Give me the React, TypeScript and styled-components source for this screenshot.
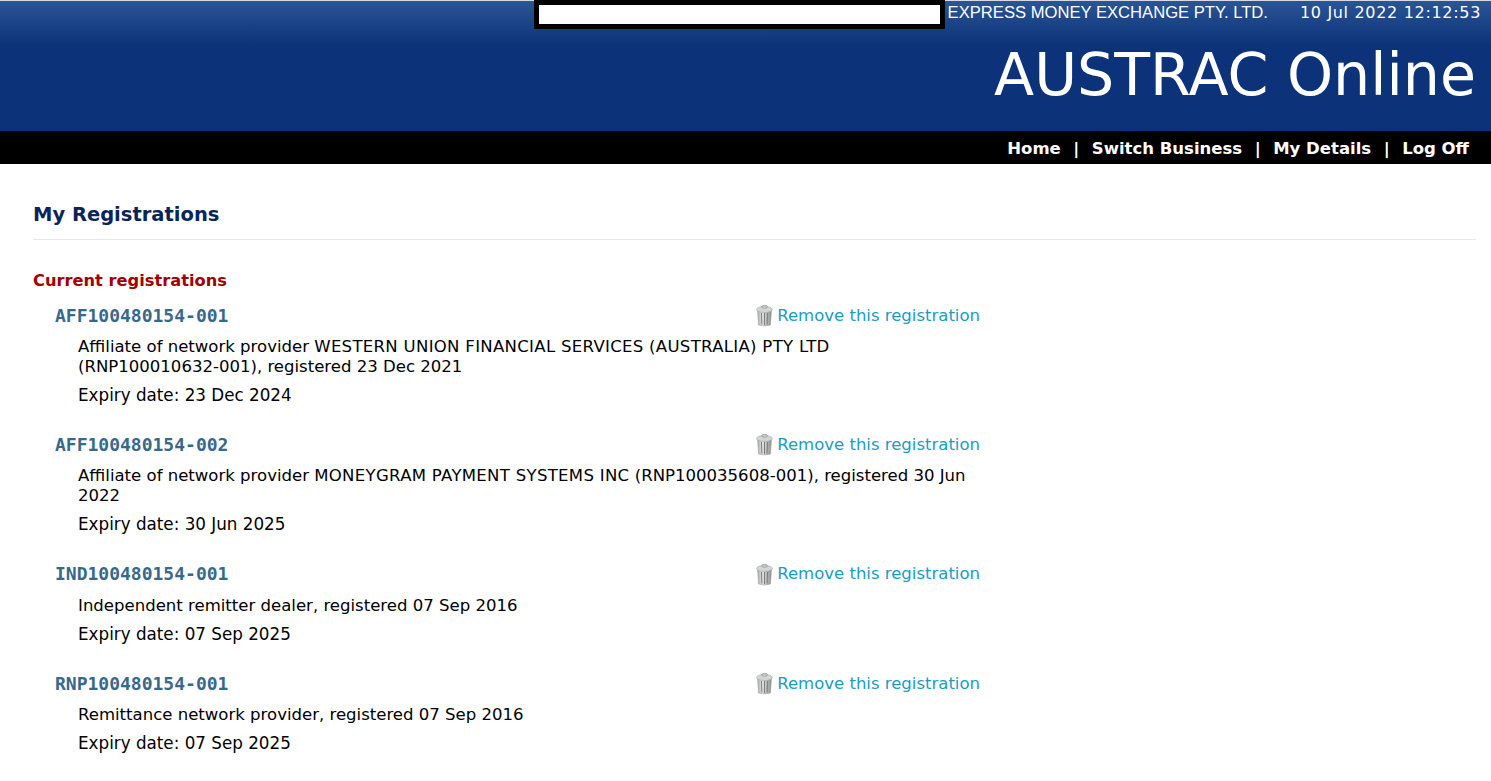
import { createGlobalStyle, styled } from "styled-components";

const GlobalStyle = createGlobalStyle`
  html, body { margin: 0; padding: 0; background: #fff; }
  body { font-family: "DejaVu Sans", Verdana, sans-serif; color: #000; overflow: hidden; }
`;

const Header = styled.header`
  height: 131px;
  border-top: 1px solid #d4dbe6;
  box-sizing: border-box;
  background: linear-gradient(#2a5596 0, #0c3379 44px, #0c3379 100%);
  color: #fff;
  display: flex;
  flex-direction: column;
`;

const TopRow = styled.div`
  display: flex;
  justify-content: flex-end;
  align-items: flex-start;
  height: 29px;
  margin-top: -1px;
  padding-right: 10px;
`;

const Redacted = styled.div`
  width: 401px;
  height: 19px;
  border: 5px solid #000;
  background: #fff;
  margin-right: 3px;
`;

const Company = styled.span`
  font-family: "Liberation Sans", Arial, sans-serif;
  font-size: 16.62px;
  line-height: 25px;
  margin-right: 32px;
`;

const Stamp = styled.span`
  font-size: 16px;
  letter-spacing: 0.68px;
  line-height: 25px;
`;

const Title = styled.h1`
  margin: 11px 15px 0 0;
  font-size: 58.6px;
  line-height: 70px;
  font-weight: 400;
  text-align: right;
`;

const NavBar = styled.nav`
  height: 33px;
  background: #000;
  color: #fff;
  display: flex;
  justify-content: flex-end;
  align-items: center;
  padding: 1px 22px 0 0;
  box-sizing: border-box;
  font-size: 16.5px;
  font-weight: 700;
`;

const NavSep = styled.span`
  margin: 0 12.5px;
`;

const Main = styled.main`
  padding: 37px 15px 0 33px;
`;

const PageTitle = styled.h2`
  margin: 0;
  padding-bottom: 11px;
  border-bottom: 1px solid #e8e8e8;
  color: #0a2459;
  font-size: 19.5px;
  line-height: 27px;
  font-weight: 700;
`;

const SectionTitle = styled.h3`
  margin: 31px 0 0;
  color: #a00000;
  font-size: 16.25px;
  line-height: 20px;
  font-weight: 700;
`;

const List = styled.div`
  width: 947px;
  margin-top: 12px;
`;

const Item = styled.section`
  padding-left: 22px;
  margin-bottom: 27.4px;
`;

const ItemHead = styled.div`
  display: flex;
  justify-content: space-between;
  align-items: center;
  height: 24px;
`;

const Code = styled.span`
  font-family: "DejaVu Sans Mono", monospace;
  font-weight: 700;
  font-size: 18px;
  color: #38688a;
`;

const RemoveLink = styled.a`
  display: flex;
  align-items: center;
  gap: 3px;
  color: #1a9cc4;
  font-size: 16.5px;
  text-decoration: none;
  cursor: pointer;
`;

const Desc = styled.p`
  margin: 10px 0 0 23px;
  font-size: 16.55px;
  line-height: 20px;
`;

const ProviderName = styled.span`
  letter-spacing: 0.3px;
`;

const RegNumber = styled.span`
  white-space: nowrap;
`;

const Expiry = styled.p`
  margin: 8px 0 0 23px;
  font-size: 16.75px;
  line-height: 20px;
`;

function TrashIcon() {
  return (
    <svg width="19" height="24" viewBox="0 0 19 24">
      <defs>
        <linearGradient id="can" x1="0" x2="1" y1="0" y2="0">
          <stop offset="0" stopColor="#a4a8a6" />
          <stop offset="0.35" stopColor="#e8eae8" />
          <stop offset="1" stopColor="#8a8e8c" />
        </linearGradient>
      </defs>
      <path d="M2.5 7 L16.5 7 L15.5 22 Q9.5 24 3.5 22 Z" fill="url(#can)" stroke="#9a9d9b" strokeWidth="0.5" />
      <path d="M6.5 10 L6.9 21.5 M9.5 10 L9.5 22 M12.5 10 L12.1 21.5" stroke="#7c807e" strokeWidth="1.1" />
      <ellipse cx="9.5" cy="6.5" rx="8" ry="3" fill="#d3d6d4" stroke="#a0a3a1" strokeWidth="0.6" />
      <ellipse cx="9.5" cy="3.8" rx="3" ry="1.4" fill="none" stroke="#a0a3a1" strokeWidth="1" />
    </svg>
  );
}

export default function App() {
  return (
    <>
      <GlobalStyle />
      <Header>
        <TopRow>
          <Redacted />
          <Company>EXPRESS MONEY EXCHANGE PTY. LTD.</Company>
          <Stamp>10 Jul 2022 12:12:53</Stamp>
        </TopRow>
        <Title>AUSTRAC Online</Title>
      </Header>
      <NavBar>
        <span>Home</span>
        <NavSep>|</NavSep>
        <span>Switch Business</span>
        <NavSep>|</NavSep>
        <span>My Details</span>
        <NavSep>|</NavSep>
        <span>Log Off</span>
      </NavBar>
      <Main>
        <PageTitle>My Registrations</PageTitle>
        <SectionTitle>Current registrations</SectionTitle>
        <List>
          <Item>
            <ItemHead>
              <Code>AFF100480154-001</Code>
              <RemoveLink>
                <TrashIcon />
                Remove this registration
              </RemoveLink>
            </ItemHead>
            <Desc>
              Affiliate of network provider <ProviderName>WESTERN UNION FINANCIAL SERVICES (AUSTRALIA) PTY LTD</ProviderName>{" "}
              <RegNumber>(RNP100010632-001),</RegNumber> registered 23 Dec 2021
            </Desc>
            <Expiry>Expiry date: 23 Dec 2024</Expiry>
          </Item>
          <Item>
            <ItemHead>
              <Code>AFF100480154-002</Code>
              <RemoveLink>
                <TrashIcon />
                Remove this registration
              </RemoveLink>
            </ItemHead>
            <Desc>
              Affiliate of network provider <ProviderName>MONEYGRAM PAYMENT SYSTEMS INC</ProviderName>{" "}
              <RegNumber>(RNP100035608-001),</RegNumber> registered 30 Jun 2022
            </Desc>
            <Expiry>Expiry date: 30 Jun 2025</Expiry>
          </Item>
          <Item>
            <ItemHead>
              <Code>IND100480154-001</Code>
              <RemoveLink>
                <TrashIcon />
                Remove this registration
              </RemoveLink>
            </ItemHead>
            <Desc>Independent remitter dealer, registered 07 Sep 2016</Desc>
            <Expiry>Expiry date: 07 Sep 2025</Expiry>
          </Item>
          <Item>
            <ItemHead>
              <Code>RNP100480154-001</Code>
              <RemoveLink>
                <TrashIcon />
                Remove this registration
              </RemoveLink>
            </ItemHead>
            <Desc>Remittance network provider, registered 07 Sep 2016</Desc>
            <Expiry>Expiry date: 07 Sep 2025</Expiry>
          </Item>
        </List>
      </Main>
    </>
  );
}
